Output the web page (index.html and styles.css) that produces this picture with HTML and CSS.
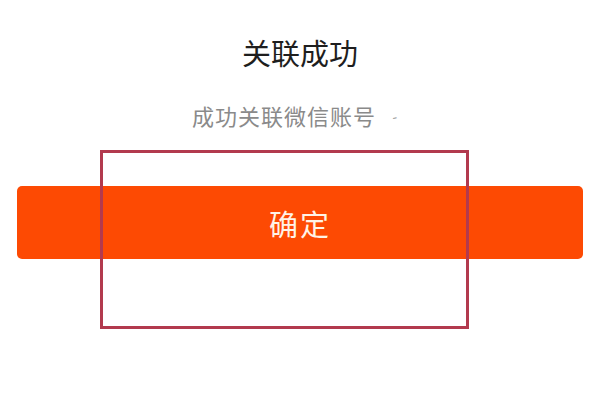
FILE: index.html
```html
<!DOCTYPE html>
<html>
<head>
<meta charset="utf-8">
<link rel="stylesheet" href="styles.css">
</head>
<body>
<div class="page">
  <h1 class="title">关联成功</h1>
  <p class="subtitle">成功关联微信账号<span class="dash">-</span></p>
  <div class="btn-wrap">
    <button class="btn">确定</button>
    <div class="mark"></div>
  </div>
</div>
</body>
</html>
```
FILE: styles.css
```css
html, body {
  margin: 0;
  padding: 0;
  background: #ffffff;
}
.page {
  width: 600px;
  height: 400px;
  font-family: "Noto Sans CJK SC", "Noto Sans", sans-serif;
  display: flex;
  flex-direction: column;
  align-items: center;
  position: relative;
}
.title {
  margin: 34px 0 0 0;
  font-size: 29px;
  line-height: 36px;
  font-weight: 400;
  color: #1e1e1e;
}
.subtitle {
  margin: 32px 0 0 -10px;
  font-size: 22px;
  line-height: 26px;
  color: #8a8a8a;
  letter-spacing: 1px;
}
.dash {
  display: inline-block;
  margin-left: 16px;
  font-size: 14px;
  color: #9a9a9a;
  transform: translateY(-3px) rotate(-12deg);
}
.btn-wrap {
  position: relative;
  align-self: stretch;
  margin: 54px 17px 0 17px;
}
.btn {
  display: block;
  width: 100%;
  height: 73px;
  border: none;
  border-radius: 5px;
  background: #fd4a03;
  color: #fff3e6;
  font-family: "Noto Sans CJK SC", "Noto Sans", sans-serif;
  font-size: 29px;
  letter-spacing: 2px;
  padding: 0;
}
.mark {
  position: absolute;
  left: 83px;
  top: -36px;
  width: 363px;
  height: 173px;
  border: 3px solid #b23a4e;
  pointer-events: none;
}
```
